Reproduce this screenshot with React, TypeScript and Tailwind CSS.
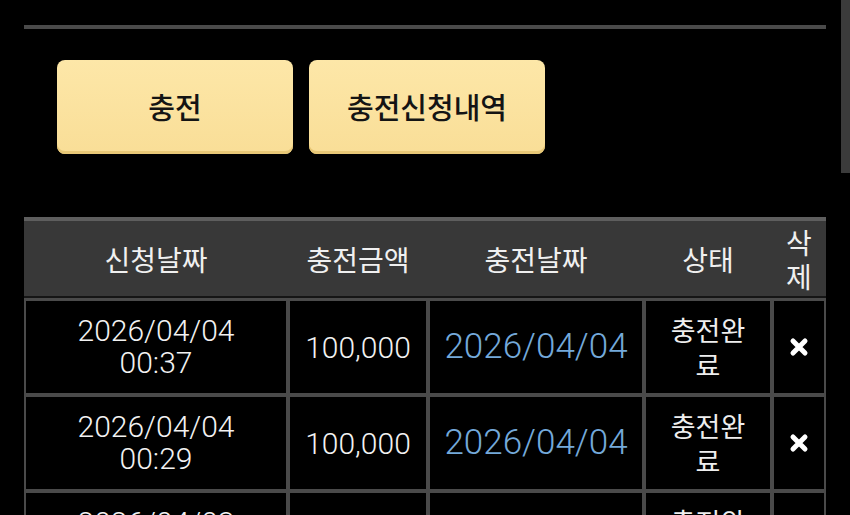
import React from 'react';

const ROWS = [
  { reqDate: '2026/04/04', reqTime: '00:37', amount: '100,000', doneDate: '2026/04/04', status: '충전완료' },
  { reqDate: '2026/04/04', reqTime: '00:29', amount: '100,000', doneDate: '2026/04/04', status: '충전완료' },
  { reqDate: '2026/04/03', reqTime: '23:58', amount: '100,000', doneDate: '2026/04/03', status: '충전완료' },
];

const COLS = 'grid grid-cols-[260px_136px_212px_124px_50px] gap-x-[4px]';

function CloseMark() {
  return (
    <svg width="20" height="20" viewBox="0 0 20 20">
      <path d="M4 4 L16 16 M16 4 L4 16" stroke="#fff" strokeWidth="5" strokeLinecap="round" />
    </svg>
  );
}

export default function App() {
  return (
    <div
      className="relative w-[850px] h-[515px] overflow-hidden bg-black"
      style={{ fontFamily: 'Roboto, "Noto Sans CJK KR", sans-serif' }}
    >
      {/* scrollbar thumb */}
      <div className="absolute right-0 top-0 w-[9px] h-[173px] bg-[#3b3b3b]" />

      <div className="pt-[25px] pl-[24px]">
        <div className="w-[802px] h-[4px] bg-[#4a4a4a]" />

        {/* Buttons */}
        <div className="flex gap-[16px] pl-[33px] mt-[31px]">
          {['충전', '충전신청내역'].map((label) => (
            <button
              key={label}
              className="w-[236px] h-[94px] rounded-[8px] bg-gradient-to-b from-[#fde7a8] to-[#f9de97] shadow-[inset_0_-3px_0_#e8c877,0_2px_4px_rgba(0,0,0,0.6)] text-[#141414] text-[29px] font-medium flex items-center justify-center"
              style={{ fontFamily: '"Noto Sans CJK KR", sans-serif' }}
            >
              {label}
            </button>
          ))}
        </div>

        {/* Table */}
        <div className="mt-[63px] w-[802px] bg-[#4a4a4a]">
          <div className="h-[4px] bg-[#5e5e5e]" />
          <div className={`${COLS} h-[75px] bg-[#383838] px-[2px] text-[#f0f0f0] text-[28px]`} style={{ fontFamily: '"Noto Sans CJK KR", sans-serif' }}>
            <div className="flex items-center justify-center">신청날짜</div>
            <div className="flex items-center justify-center">충전금액</div>
            <div className="flex items-center justify-center">충전날짜</div>
            <div className="flex items-center justify-center">상태</div>
            <div className="flex items-center justify-center text-center leading-[34px]">삭<br />제</div>
          </div>
          <div className="h-[2px] bg-[#151515]" />
          <div className={`${COLS} gap-y-[4px] px-[2px] pt-[3px] pb-[2px]`}>
            {ROWS.map((r, i) => (
              <React.Fragment key={i}>
                <div className="h-[92px] bg-black flex flex-col items-center justify-center text-[#f2f2f2] text-[30px] font-light leading-[32px]">
                  <span>{r.reqDate}</span>
                  <span>{r.reqTime}</span>
                </div>
                <div className="h-[92px] bg-black flex items-center justify-center text-[#f2f2f2] text-[30px] font-light">
                  {r.amount}
                </div>
                <div className="h-[92px] bg-black flex items-center justify-center text-[#74a9da] text-[35px] font-light">
                  {r.doneDate}
                </div>
                <div
                  className="h-[92px] bg-black flex items-center justify-center text-center text-[#eeeeee] text-[27px] leading-[35px]"
                  style={{ fontFamily: '"Noto Sans CJK KR", sans-serif' }}
                >
                  <span className="w-[96px] break-all">{r.status}</span>
                </div>
                <div className="h-[92px] bg-black flex items-center justify-center">
                  <CloseMark />
                </div>
              </React.Fragment>
            ))}
          </div>
        </div>
      </div>
    </div>
  );
}
